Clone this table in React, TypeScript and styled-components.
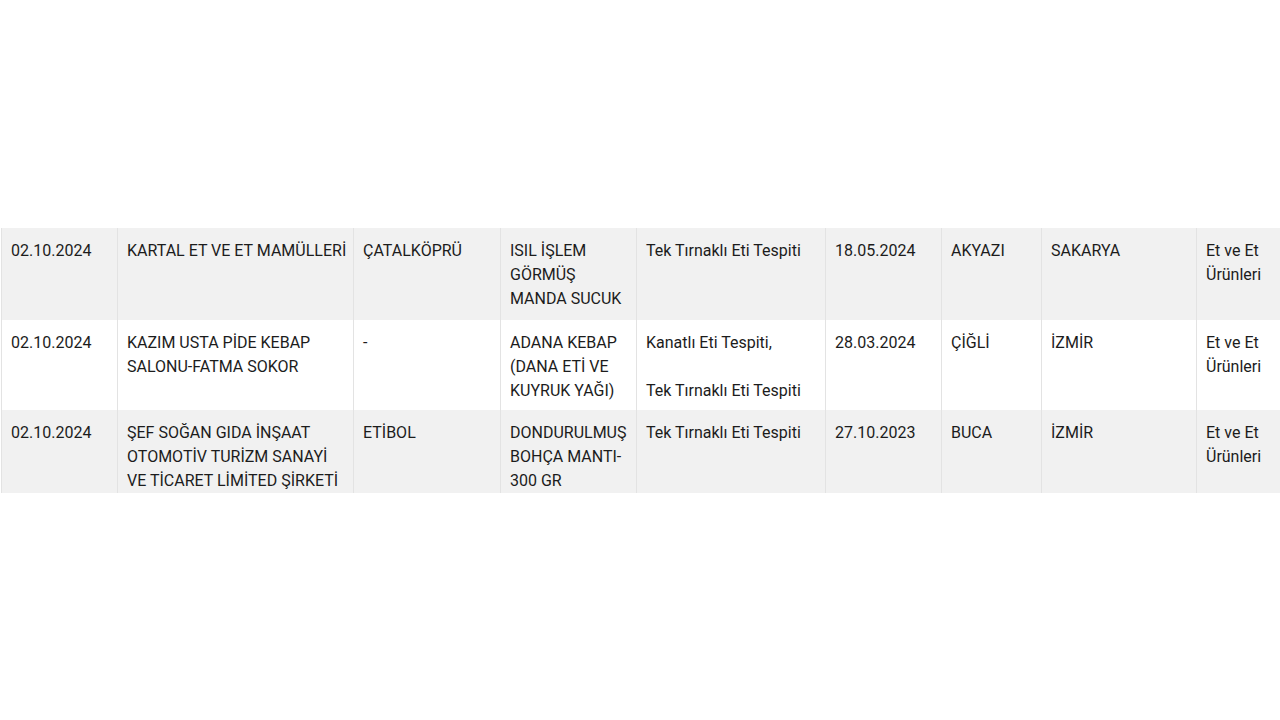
import React from 'react'
import styled, { createGlobalStyle } from 'styled-components'

const GlobalStyle = createGlobalStyle`
  html, body {
    margin: 0;
    padding: 0;
    background: #fff;
  }
  body {
    font-family: Roboto, "Liberation Sans", Arial, sans-serif;
    color: #222;
  }
`

const Page = styled.div`
  width: 1280px;
  height: 720px;
  overflow: hidden;
  padding-top: 228px;
  box-sizing: border-box;
`

const Table = styled.table`
  border-collapse: collapse;
  table-layout: fixed;
  width: 1300px;
  margin-left: 1px;
  font-size: 16px;
  line-height: 24px;
`

const Row = styled.tr<{ $striped?: boolean; $height: number }>`
  background: ${(p) => (p.$striped ? '#f1f1f1' : '#fff')};
  height: ${(p) => p.$height}px;
`

const Cell = styled.td`
  border-left: 1px solid #e3e3e3;
  padding: 11px 6px 0 9px;
  vertical-align: top;
  color: #1c1c1c;
  overflow: hidden;
`

const Line = styled.div`
  min-height: 24px;
  white-space: nowrap;
`

const cols = [116, 236, 147, 136, 189, 116, 100, 155, 105]

const rows = [
  {
    height: 92,
    cells: [
      '02.10.2024',
      'KARTAL ET VE ET MAMÜLLERİ',
      'ÇATALKÖPRÜ',
      'ISIL İŞLEM GÖRMÜŞ MANDA SUCUK',
      'Tek Tırnaklı Eti Tespiti',
      '18.05.2024',
      'AKYAZI',
      'SAKARYA',
      'Et ve Et Ürünleri',
    ],
  },
  {
    height: 90,
    cells: [
      '02.10.2024',
      'KAZIM USTA PİDE KEBAP SALONU-FATMA SOKOR',
      '-',
      'ADANA KEBAP (DANA ETİ VE KUYRUK YAĞI)',
      ['Kanatlı Eti Tespiti,', '', 'Tek Tırnaklı Eti Tespiti'],
      '28.03.2024',
      'ÇİĞLİ',
      'İZMİR',
      'Et ve Et Ürünleri',
    ],
  },
  {
    height: 83,
    cells: [
      '02.10.2024',
      'ŞEF SOĞAN GIDA İNŞAAT OTOMOTİV TURİZM SANAYİ VE TİCARET LİMİTED ŞİRKETİ',
      'ETİBOL',
      'DONDURULMUŞ BOHÇA MANTI-300 GR',
      'Tek Tırnaklı Eti Tespiti',
      '27.10.2023',
      'BUCA',
      'İZMİR',
      'Et ve Et Ürünleri',
    ],
  },
]

export default function App() {
  return (
    <Page>
      <GlobalStyle />
      <Table>
        <colgroup>
          {cols.map((w, i) => (
            <col key={i} style={{ width: w }} />
          ))}
        </colgroup>
        <tbody>
          {rows.map((row, r) => (
            <Row key={r} $striped={r % 2 === 0} $height={row.height}>
              {row.cells.map((c, i) => (
                <Cell key={i}>
                  {Array.isArray(c) ? c.map((l, j) => <Line key={j}>{l}</Line>) : c}
                </Cell>
              ))}
            </Row>
          ))}
        </tbody>
      </Table>
    </Page>
  )
}
